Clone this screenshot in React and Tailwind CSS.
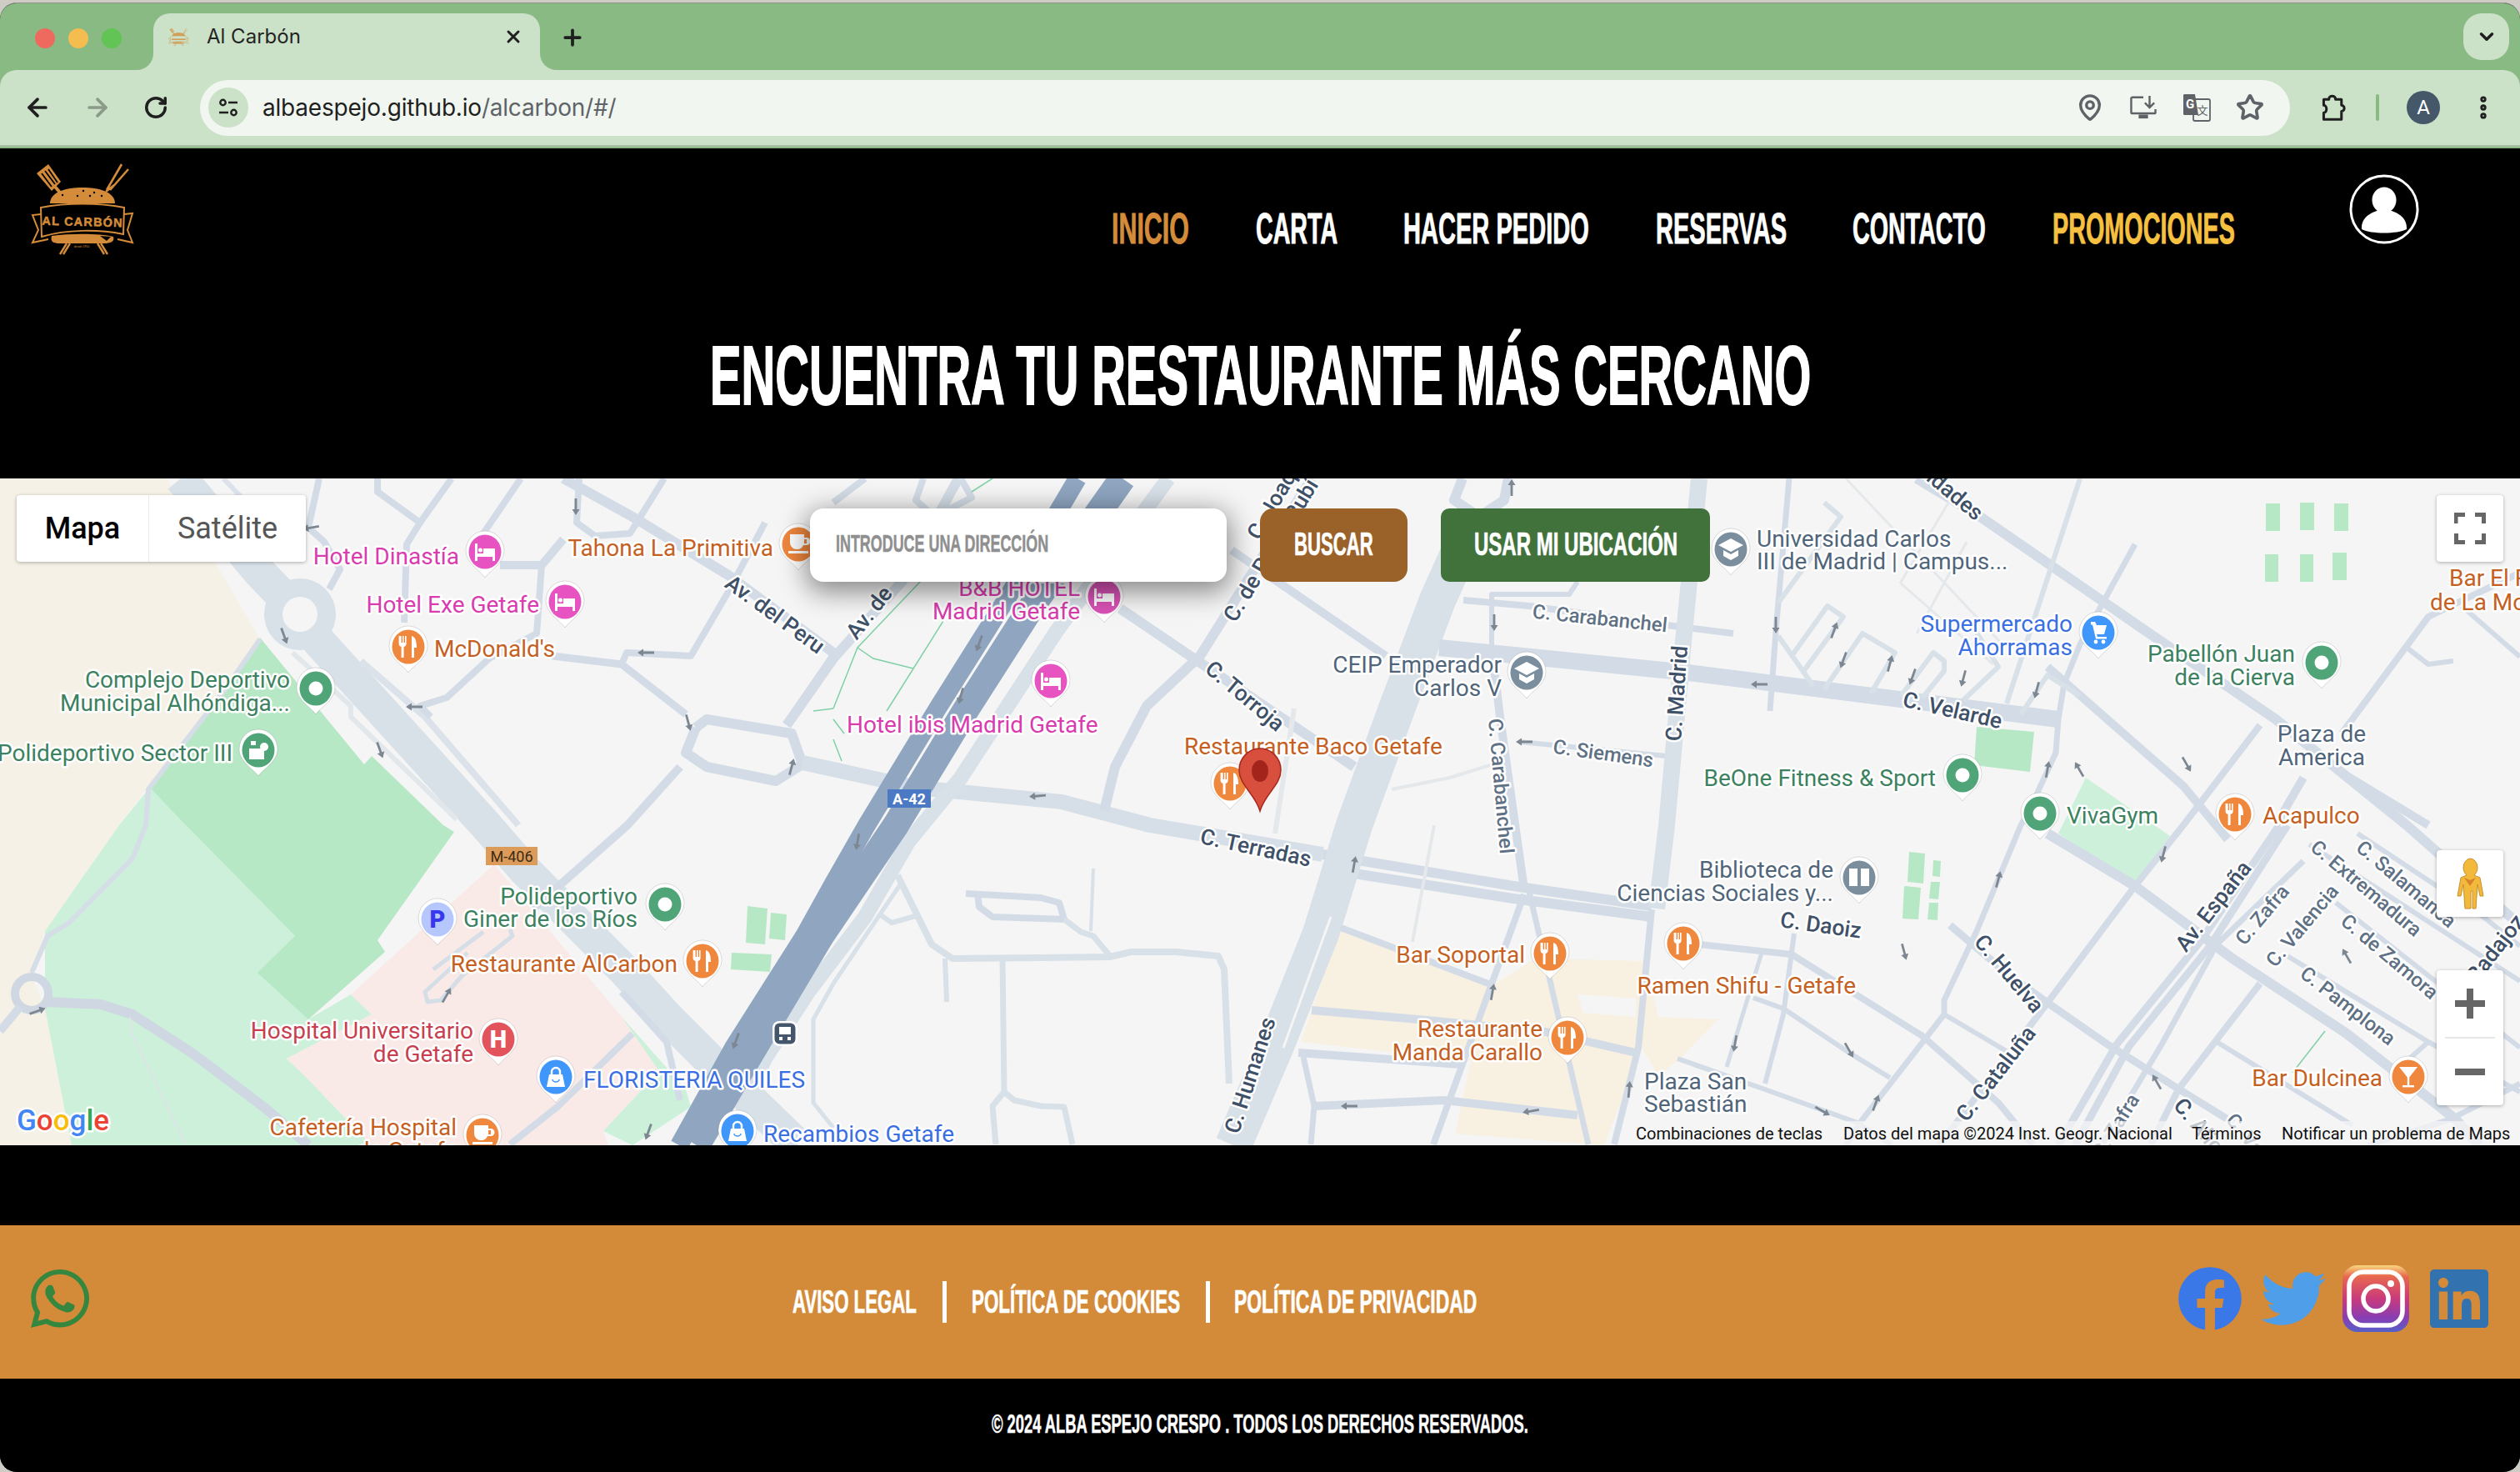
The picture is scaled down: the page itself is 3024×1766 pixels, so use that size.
import React, { useLayoutEffect, useRef } from "react";
import { ArrowLeft, ArrowRight, RotateCw, X, Plus, ChevronDown, MapPin, Star, EllipsisVertical } from "lucide-react";
import { FaWhatsapp, FaFacebook, FaTwitter, FaLinkedin } from "react-icons/fa";

function Fit({ children, className = "" }) {
  const outer = useRef(null);
  const inner = useRef(null);
  useLayoutEffect(() => {
    inner.current.style.transform = `scaleX(${outer.current.clientWidth / inner.current.scrollWidth})`;
  }, []);
  return (
    <span ref={outer} className={`block shrink-0 whitespace-nowrap leading-none font-['Liberation_Sans',sans-serif] font-bold [-webkit-text-stroke:0.018em_currentColor] ${className}`}>
      <span ref={inner} className="inline-block origin-left">{children}</span>
    </span>
  );
}

const ROADS = [
  [40, "#d8e0e8", "217,574 312,687 360,737 383,770 583,990 628,1042 752,1167 800,1220 870,1290 957,1374"],
  [8, "#d3dce6", "746,1190 800,1250 816,1320"],
  [6, "#e2e7ec", "351,783 421,847 421,860 548,983"],
  [8, "#dbe2ea", "433,793 510,860 622,990"],
  [6, "#dbe2ea", "268,574 290,597"],
  [8, "#d3dce6", "383,574 370,633 389,650 408,683 395,707"],
  [8, "#d3dce6", "453,574 453,590 504,627 488,653 485,747"],
  [8, "#d3dce6", "542,574 504,627"],
  [8, "#d3dce6", "625,574 580,640"],
  [10, "#d3dce6", "600,678 650,678 676,647"],
  [8, "#d3dce6", "650,678 644,760 587,790 536,837 504,847 517,860"],
  [12, "#d3dce6", "676,574 759,620 874,690 1000,783"],
  [8, "#d3dce6", "695,574 692,627 714,643 756,640 797,574"],
  [9, "#d3dce6", "663,787 746,797 823,857"],
  [8, "#d3dce6", "746,797 752,783 829,787 874,710 918,627"],
  [12, "#d3dce6", "835,873 848,863 950,880 963,917 931,937 848,920 823,903 835,873"],
  [10, "#d3dce6", "816,920 753,990 640,1090"],
  [10, "#d3dce6", "944,870 1000,787"],
  [18, "#d6dee7", "963,915 1100,945 1274,962 1380,990 1587,1025"],
  [12, "#d3dce6", "1587,1025 1816,1063 1982,1087"],
  [12, "#d3dce6", "1587,1042 1816,1078 1982,1100"],
  [12, "#cfd8e2", "57,1202 121,1205 159,1217 230,1263 319,1330 370,1374"],
  [6, "#d5dde6", "38,1167 57,1123 83,1107 159,1030 175,990 178,947 268,830 312,767"],
  [10, "#d3dce6", "0,1237 24,1208"],
  [2, "#dde3e9", "156,1220 158,1240 223,1373"],
  [5, "#d5dde6", "612,1115 615,1123 555,1170 529,1200 513,1202 510,1190 561,1143"],
  [5, "#d5dde6", "520,1163 580,1118"],
  [8, "#d3dce6", "759,1240 670,1327 612,1373"],
  [18, "#d8e0e8", "1402,574 1268,757 1153,933 1090,1010 1038,1100 970,1190 918,1270 890,1330"],
  [5, "#d8e0e8", "1000,1180 976,1223 976,1323 1000,1353"],
  [5, "#d8e0e8", "1083,1057 1000,1180"],
  [44, "#d8e0e8", "1770,620 1725,720 1675,853 1625,990 1585,1120 1530,1257 1480,1374"],
  [3, "#f5f5f5", "1597,1100 1540,1257"],
  [12, "#d3dce6", "1755,574 1745,600 1775,620 1805,600 1810,574"],
  [12, "#d3dce6", "1344,730 1625,920"],
  [10, "#d3dce6", "1478,660 1663,787"],
  [12, "#d3dce6", "1574,574 1440,787 1376,847 1338,920 1325,973"],
  [6, "#e5e8eb", "1553,850 1530,1000"],
  [8, "#d3dce6", "1159,1072 1249,1077 1271,1083 1277,1103 1191,1100 1175,1088 1173,1072"],
  [7, "#d8e0e8", "1277,1103 1297,1118 1312,1123 1332,1147"],
  [4, "#d8e0e8", "1312,1042 1309,1117"],
  [8, "#d8e0e8", "1077,1050 1118,1133 1143,1150 1332,1148 1357,1142 1411,1142 1462,1147 1469,1163 1475,1300"],
  [6, "#d8e0e8", "1134,1150 1136,1202"],
  [7, "#d8e0e8", "1203,1150 1205,1310 1191,1327 1195,1373"],
  [7, "#d8e0e8", "1205,1310 1217,1320 1249,1327 1277,1328 1287,1373"],
  [6, "#d8e0e8", "1057,1098 1070,1107 1102,1098"],
  [8, "#d3dce6", "1609,1113 1791,1182"],
  [10, "#d3dce6", "1574,1212 1702,1223 1855,1238 1963,1263"],
  [10, "#d3dce6", "1558,1263 1753,1277"],
  [7, "#d3dce6", "1564,1268 1577,1327 1573,1373"],
  [10, "#d3dce6", "1577,1327 1733,1320 1893,1338"],
  [8, "#d3dce6", "1829,1073 1720,1373"],
  [7, "#d3dce6", "1835,1070 1906,1373"],
  [8, "#d3dce6", "1982,1091 1966,1257 1937,1373"],
  [4, "#e5e8eb", "1721,990 1695,1130"],
  [8, "#d3dce6", "1756,720 1835,727 2000,750 2080,760"],
  [6, "#d3dce6", "1790,777 1790,713 1883,713 1893,698"],
  [10, "#d3dce6", "1790,777 1800,860 1829,1067"],
  [6, "#d3dce6", "1823,890 2000,907"],
  [4, "#e5e8eb", "1670,947 1740,933 1791,917"],
  [20, "#d3dce6", "1727,777 2026,807 2470,863"],
  [20, "#d8e0e8", "2039,574 2020,770 2000,990 1988,1090"],
  [7, "#d3dce6", "2147,574 2131,757 2124,853"],
  [7, "#d3dce6", "2470,863 2467,903 2444,953 2425,990 2372,1117 2333,1200 2333,1217 2235,1343 2215,1374"],
  [7, "#d3dce6", "2470,863 2477,820 2496,773 2562,653"],
  [12, "#d3dce6", "2300,574 2372,617 2575,757 2731,863 2888,990 3024,1110"],
  [10, "#d3dce6", "2457,800 2620,943 2673,1007"],
  [12, "#d3dce6", "2457,1000 2562,1063 2679,1150 2816,1240 2947,1343 2975,1374"],
  [6, "#d8e0e8", "2496,574 2408,844"],
  [8, "#d3dce6", "3024,687 2914,740 2810,880"],
  [6, "#d3dce6", "2954,727 3024,788"],
  [6, "#d3dce6", "2888,777 2914,797 2944,793"],
  [8, "#d3dce6", "2712,870 2620,990 2562,1063 2457,1203 2353,1340 2327,1374"],
  [10, "#d3dce6", "2810,927 2914,990"],
  [10, "#d3dce6", "2764,933 2731,990"],
  [6, "#d8e0e8", "2189,603 2209,620 2134,723"],
  [6, "#d8e0e8", "2134,763 2176,823"],
  [6, "#d8e0e8", "2150,787 2193,727 2212,740 2163,807"],
  [6, "#d8e0e8", "2189,827 2235,760 2274,783 2245,832"],
  [6, "#d8e0e8", "2281,835 2320,783 2333,793 2333,805 2307,837"],
  [6, "#d8e0e8", "2356,840 2398,800 2366,750"],
  [6, "#d8e0e8", "2425,857 2457,810 2496,835"],
  [3, "#e5e8eb", "2281,700 2392,797"],
  [3, "#e5e8eb", "2215,574 2400,770"],
  [3, "#e5e8eb", "2340,600 2280,700"],
  [3, "#e5e8eb", "2360,650 2300,760"],
  [8, "#d3dce6", "2039,1133 2150,1145 2307,1243 2398,1323 2440,1374"],
  [6, "#d3dce6", "2153,1120 2140,1217 2118,1300"],
  [5, "#d3dce6", "2114,1143 2072,1280"],
  [6, "#d3dce6", "2104,1197 2140,1210 2219,1263 2268,1293"],
  [6, "#d3dce6", "2013,1270 2118,1307 2229,1347 2270,1374"],
  [6, "#d3dce6", "2333,1217 2411,1263"],
  [9, "#d3dce6", "2340,1110 2411,1170 2457,1203 2529,1253 2620,1310 2680,1347"],
  [7, "#d3dce6", "2764,1033 2660,1133 2594,1253 2522,1373"],
  [9, "#d3dce6", "2735,990 2640,1130 2540,1253 2470,1374"],
  [9, "#d3dce6", "2745,990 2652,1135 2555,1255 2490,1374"],
  [8, "#d3dce6", "2712,1180 2614,1307 2581,1373"],
  [6, "#d3dce6", "2771,1013 3024,1177"],
  [6, "#d3dce6", "2829,1000 2980,1100 3024,1135"],
  [6, "#d3dce6", "2803,1083 3024,1257"],
  [6, "#d3dce6", "2745,1147 2914,1250 3024,1310"],
  [6, "#d3dce6", "2660,1250 2823,1350"],
  [6, "#d3dce6", "2914,1250 2869,1290"],
  [7, "#d3dce6", "3024,1300 2940,1343 2842,1374"],
  [8, "#d3dce6", "1038,574 1000,603"],
  [8, "#d3dce6", "1108,574 1099,600 1121,620 1166,597 1153,574"],
  [12, "#d3dce6", "1150,574 1083,697 1000,790 944,870"],
];
const THIN_GREEN = [
  "1191,574 1166,590",
  "1105,697 1029,777 1000,850",
  "1029,777 1048,790 1096,802",
  "1137,737 1064,853",
  "1000,863 1013,880",
  "1000,887 1010,913",
  "2790,1237 2751,1287",
  "976,853 1000,850",
];
const HIGHWAY = [
  [32, "1347,574 1240,725 1160,850 1075,990 985,1123 905,1257 836,1374"],
  [22, "1293,574 1210,715 1125,850 1040,990 1000,1060 965,1123 880,1257 815,1374"],
];
const ARROWS = [
  [691,608,180],[373,633,-100],[341,763,160],[775,783,-90],[497,848,-90],[826,867,165],[950,920,15],[456,900,160],
  [45,1213,70],[536,1194,30],[883,1249,200],[778,1358,200],[1814,585,0],[1175,772,200],[1153,835,195],[1245,955,-95],
  [1793,747,180],[1829,890,-90],[1029,1010,190],[1625,1037,10],[1791,1190,10],[1619,1327,-90],[1837,1333,-100],[1955,1307,5],
  [2131,750,180],[2201,756,20],[2212,792,200],[2268,796,15],[2295,812,200],[2356,814,195],[2444,828,195],[2111,821,-90],
  [2457,923,10],[2495,923,-30],[2624,917,150],[2596,1025,195],[2398,1055,15],[2285,1142,165],[2816,1147,-30],[2219,1260,150],
  [2082,1252,190],[2251,1323,20],[2187,1333,120],[2588,1298,-30],
];
const OR = "#c5601f", PK = "#d83cae", GR = "#3c8160", BL = "#3a6fe3", RD = "#c83e4e", GY = "#50657a";
const LABELS = [
  ["Hotel Dinastía", 551, 677, "end", PK], ["Tahona La Primitiva", 928, 667, "end", OR], ["Hotel Exe Getafe", 647, 735, "end", PK],
  ["McDonald's", 521, 788, "start", OR], ["Complejo Deportivo", 348, 825, "end", GR], ["Municipal Alhóndiga...", 348, 853, "end", GR],
  ["Polideportivo Sector III", 279, 913, "end", GR], ["Polideportivo", 765, 1085, "end", GR], ["Giner de los Ríos", 765, 1112, "end", GR],
  ["Restaurante AlCarbon", 813, 1166, "end", OR], ["Hospital Universitario", 568, 1246, "end", RD], ["de Getafe", 568, 1274, "end", RD],
  ["FLORISTERIA QUILES", 700, 1305, "start", BL], ["Cafetería Hospital", 548, 1362, "end", OR], ["de Getafe", 548, 1390, "end", OR],
  ["Recambios Getafe", 916, 1370, "start", BL], ["B&B HOTEL", 1296, 715, "end", PK], ["Madrid Getafe", 1296, 743, "end", PK],
  ["Hotel ibis Madrid Getafe", 1016, 879, "start", PK], ["Restaurante Baco Getafe", 1421, 905, "start", OR],
  ["CEIP Emperador", 1802, 807, "end", GY], ["Carlos V", 1802, 835, "end", GY], ["Universidad Carlos", 2108, 656, "start", GY],
  ["III de Madrid | Campus...", 2108, 683, "start", GY], ["Supermercado", 2487, 758, "end", BL], ["Ahorramas", 2487, 786, "end", BL],
  ["Pabellón Juan", 2754, 794, "end", GR], ["de la Cierva", 2754, 822, "end", GR], ["BeOne Fitness & Sport", 2323, 943, "end", GR],
  ["Plaza de", 2786, 890, "middle", GY], ["America", 2786, 918, "middle", GY], ["VivaGym", 2480, 988, "start", GR], ["Acapulco", 2715, 988, "start", OR],
  ["Bar El Rey", 2939, 703, "start", OR], ["de La Morena", 2916, 732, "start", OR], ["Biblioteca de", 2200, 1053, "end", GY],
  ["Ciencias Sociales y...", 2200, 1081, "end", GY], ["Ramen Shifu - Getafe", 2227, 1192, "end", OR], ["Bar Soportal", 1830, 1155, "end", OR],
  ["Restaurante", 1851, 1244, "end", OR], ["Manda Carallo", 1851, 1272, "end", OR], ["Plaza San", 1973, 1307, "start", GY], ["Sebastián", 1973, 1334, "start", GY],
  ["Bar Dulcinea", 2859, 1303, "end", OR],
];
const ST = "#3f5168", SG = "#5f7184";
const STREETS = [
  ["Av. del Peru", 930, 737, 36, ST], ["Av. de", 1043, 735, -52, ST], ["C. Joaquín", 1535, 590, -60, ST], ["C. de Pablo Rubí", 1525, 660, -59, ST],
  ["C. Torroja", 1494, 835, 40, ST], ["C. Terradas", 1507, 1017, 12, ST], ["C. Carabanchel", 1920, 741, 6, SG], ["C. Siemens", 1924, 903, 8, SG],
  ["C. Carabanchel", 1802, 943, 85, SG], ["C. Madrid", 2012, 832, -86, ST], ["C. Velarde", 2343, 852, 13, ST], ["Universidades", 2312, 565, 40, ST],
  ["C. Humanes", 1500, 1290, -72, ST], ["C. Daoiz", 2185, 1110, 8, ST], ["C. Huelva", 2411, 1168, 50, ST], ["C. Cataluña", 2395, 1288, -52, ST],
  ["Av. España", 2656, 1087, -52, ST], ["C. Zafra", 2714, 1097, -50, SG], ["C. Valencia", 2762, 1110, -50, SG], ["C. Extremadura", 2840, 1065, 40, SG],
  ["C. Salamanca", 2888, 1060, 40, SG], ["C. de Zamora", 2868, 1147, 40, SG], ["C. Pamplona", 2818, 1206, 38, SG], ["C. Badajoz", 2985, 1150, -52, ST],
  ["C. Zafra", 2538, 1350, -58, SG], ["C. Alicante", 2655, 1370, 50, ST], ["C. Valladolid", 2720, 1390, 50, SG],
];

const W = "#fff";
const ICONS = {
  bed: (c) => (<g><path d="M-12,-10v21h3v-5h18v5h3V-4H-2v6h-7v-12z" fill={W} /><circle cx="-5.5" cy="-2" r="2.5" fill={W} /></g>),
  food: () => (<g fill={W}><path d="M-10,-13h1.6v8h1.4v-8h1.6v8h1.4v-8H-2.4v10a3.5,3.5 0 0 1-3,3v13h-3V0a3.5,3.5 0 0 1-3-3v-10z" /><path d="M4,-13c5,1 6,8 6,14h-3v12H4z" /></g>),
  cafe: () => (<g fill={W}><path d="M-10,-12h17v4h3a4,4 0 0 1 0,9h-4a8,8 0 0 1-8,5h-0a8,8 0 0 1-8-8z" /><rect x="-12" y="8" width="24" height="3" /><rect x="7" y="-6" width="3" height="5" fill="#ef873d" /></g>),
  dot: () => <circle r="8.5" fill={W} />,
  gym: () => (<g fill={W}><rect x="-11" y="-2" width="18" height="13" /><circle cx="7" cy="-4" r="5" /><rect x="-9" y="-11" width="6" height="5" /></g>),
  bag: (c) => (<g><path d="M-8,-3h16l3,15h-22z" fill={W} /><path d="M-5,-3v-3a5,5 0 0 1 10,0v3" fill="none" stroke={W} strokeWidth="2.4" /><path d="M-4,3a4,3 0 0 0 8,0" fill="none" stroke={c} strokeWidth="1.6" /></g>),
  cart: () => (<g fill={W}><path d="M-9,-13h5l2,4h12l-3,11h-9l1,3h11v2.5h-13l-4-17h-2z" /><circle cx="-3" cy="11" r="2.4" /><circle cx="6" cy="11" r="2.4" /></g>),
  school: (c) => (<g><path d="M0,-13l15,8l-15,8l-15-8z" fill={W} /><path d="M-9,1v7l9,5l9-5v-7l-9,5z" fill={W} /></g>),
  book: () => (<g fill={W}><path d="M-12,-11h10v21h-10z" /><path d="M2,-11h10v21h-10z" /></g>),
  bar: () => (<g><path d="M-11,-12h22l-11,14z" fill={W} /><rect x="-1.2" y="0" width="2.4" height="10" fill={W} /><rect x="-7" y="10" width="14" height="2.4" fill={W} /></g>),
  H: () => <text y="10" textAnchor="middle" fontFamily="Roboto, sans-serif" fontWeight="900" fontSize="29" fill={W}>H</text>,
  P: () => <text y="10" textAnchor="middle" fontFamily="Roboto, sans-serif" fontWeight="900" fontSize="29" fill="#3838ee">P</text>,
};
const O = "#ef873d", P = "#e754c2", G = "#4fa578", B = "#3f96fb", S = "#7a8e9e";
const PINS = [
  [582,662,P,"bed"],[958,653,O,"cafe"],[678,722,P,"bed"],[490,776,O,"food"],[379,826,G,"dot"],[310,900,G,"gym"],[798,1085,G,"dot"],
  [525,1103,"#b5c7fd","P"],[843,1153,O,"food"],[598,1247,"#e2535c","H"],[667,1292,B,"bag"],[579,1362,O,"cafe"],[885,1357,B,"bag"],
  [1325,716,"#d952b6","bed"],[1261,817,P,"bed"],[1476,940,O,"food"],[1832,807,S,"school"],[2077,659,S,"school"],[2518,759,B,"cart"],
  [2786,795,G,"dot"],[2355,930,G,"dot"],[2448,976,G,"dot"],[2682,977,O,"food"],[2231,1053,S,"book"],[2020,1132,O,"food"],[1860,1144,O,"food"],
  [1881,1245,O,"food"],[2890,1292,O,"bar"],
];

function MapDrawing() {
  const halo = { stroke: "#fff", strokeWidth: 5, paintOrder: "stroke", strokeLinejoin: "round" };
  return (
    <svg viewBox="0 574 3024 800" className="absolute inset-0 w-[3024px] h-[800px]" fontFamily="Roboto, sans-serif">
      <rect x="0" y="574" width="3024" height="800" fill="#f5f5f5" />
      <polygon points="0,574 200,574 312,767 143,990 54,1117 38,1170 54,1210 86,1374 0,1374" fill="#f5f1e7" />
      <polygon points="312,765 178,947 143,990 54,1117 54,1210 86,1374 446,1374 367,1292 344,1270 446,1217 421,1193 370,1223 354,1123 223,990" fill="#ccf0da" />
      <polygon points="312,765 182,947 223,990 354,1123 309,1167 370,1223 462,1142 453,1128 545,998 532,990 446,907 437,917" fill="#b7e8c5" />
      <polygon points="593,1037 421,1193 446,1217 344,1270 367,1292 446,1374 730,1374 724,1357 791,1285 746,1220" fill="#faeae7" />
      <polygon points="746,1220 823,1307 829,1328 759,1374 724,1357 791,1285" fill="#ccf0da" />
      <polygon points="1609,1112 1790,1183 1842,1150 1976,1153 1990,1220 2062,1223 2013,1273 1990,1290 1970,1257 1925,1374 1746,1360 1765,1273 1561,1250" fill="#f8f1e1" />
      <polygon points="1893,1193 1963,1198 1963,1220 1900,1215" fill="#f5f5f5" />
      {["2719,604 2736,604 2736,637 2719,637","2760,603 2777,603 2777,636 2760,636","2801,604 2818,604 2818,637 2801,637",
        "2718,665 2734,665 2734,698 2718,698","2760,665 2776,665 2776,698 2760,698","2799,663 2816,663 2816,696 2799,696",
        "2372,872 2441,878 2436,926 2369,918","2291,1022 2310,1024 2308,1060 2289,1058","2320,1032 2329,1033 2328,1052 2319,1051",
        "2285,1063 2305,1065 2302,1103 2283,1102","2317,1058 2328,1058 2326,1079 2315,1078","2315,1083 2326,1083 2325,1104 2313,1103",
        "897,1087 921,1090 918,1133 895,1131","925,1095 944,1097 942,1128 923,1126","878,1143 926,1145 924,1166 877,1163"].map((p) => (
        <polygon key={p} points={p} fill="#b7e8c5" />
      ))}
      <polygon points="2503,933 2604,1003 2562,1060 2470,1000" fill="#ccf0da" />
      <circle cx="360" cy="737" r="32" fill="none" stroke="#d8e0e8" strokeWidth="22" />
      <circle cx="38" cy="1192" r="20" fill="none" stroke="#cfd8e2" strokeWidth="10" />
      {ROADS.map(([w, c, p], i) => (
        <polyline key={i} points={p} fill="none" stroke={c} strokeWidth={w} strokeLinejoin="round" />
      ))}
      <circle cx="360" cy="737" r="21" fill="#f5f5f5" />
      {THIN_GREEN.map((p) => <polyline key={p} points={p} fill="none" stroke="#7fd0a5" strokeWidth="1.5" />)}
      {HIGHWAY.map(([w, p]) => <polyline key={p} points={p} fill="none" stroke="#8fa5c0" strokeWidth={w} strokeLinejoin="round" />)}
      {ARROWS.map(([x, y, r], i) => (
        <path key={i} transform={`translate(${x},${y}) rotate(${r})`} d="M0,-10L4.5,-3H1.4V10H-1.4V-3H-4.5Z" fill="#7d8791" />
      ))}
      <rect x="583" y="1016" width="62" height="22" fill="#dc9b58" />
      <text x="614" y="1034" textAnchor="middle" fontSize="18" fill="#3d2b17">M-406</text>
      <rect x="1065" y="947" width="52" height="22" fill="#4c79c4" />
      <text x="1091" y="965" textAnchor="middle" fontSize="18" fontWeight="700" fill="#fff">A-42</text>
      <g transform="translate(942,1240)">
        <rect x="-15" y="-15" width="30" height="30" rx="8" fill="#fff" />
        <rect x="-12.5" y="-12.5" width="25" height="25" rx="6" fill="#44566c" />
        <path d="M-7,-8h14v9h-14zM-7,4h4v4h-4zM3,4h4v4h-4z" fill="#fff" />
      </g>
      {STREETS.map(([t, x, y, r, c], i) => (
        <text key={i} transform={`translate(${x},${y}) rotate(${r})`} dy="9" textAnchor="middle" fontSize={c === SG ? 24 : 26.5} fontWeight="500" fill={c} {...halo}>{t}</text>
      ))}
      {LABELS.map(([t, x, y, a, c], i) => (
        <text key={i} x={x} y={y} textAnchor={a} fontSize="28" fill={c} {...halo}>{t}</text>
      ))}
      {PINS.map(([x, y, c, k], i) => (
        <g key={i} transform={`translate(${x},${y})`}>
          <path d="M0,31C-4,24 -23,14 -23,-1A23,24 0 1 1 23,-1C23,14 4,24 0,31Z" fill="#fff" stroke="#00000022" strokeWidth="1" />
          <ellipse rx="19.5" ry="20.5" fill={c} />
          {ICONS[k](c)}
        </g>
      ))}
      <g transform="translate(1512,926)">
        <path d="M0,47C-6,26 -25,16 -25,-2A25,26 0 1 1 25,-2C25,16 6,26 0,47Z" fill="#d94f3e" stroke="#a8281c" strokeWidth="1.5" />
        <ellipse rx="10" ry="13" cy="-1" fill="#a3241b" />
      </g>
      <text x="20" y="1356" fontSize="35" fontWeight="500" {...halo}>
        <tspan fill="#4285f4">G</tspan><tspan fill="#ea4335">o</tspan><tspan fill="#fbbc05">o</tspan><tspan fill="#4285f4">g</tspan><tspan fill="#34a853">l</tspan><tspan fill="#ea4335">e</tspan>
      </text>
      <rect x="1953" y="1345" width="1071" height="29" fill="#f5f5f5" fillOpacity="0.72" />
      {[["Combinaciones de teclas", 1963], ["Datos del mapa ©2024 Inst. Geogr. Nacional", 2212], ["Términos", 2630], ["Notificar un problema de Maps", 2738]].map(([t, x]) => (
        <text key={t} x={x} y="1367" fontSize="20" fill="#111">{t}</text>
      ))}
    </svg>
  );
}

function Logo({ className = "", bg = "#000", small = false }) {
  const c = "#d48c3a";
  return (
    <svg viewBox="37 195 126 113" className={className}>
      <path d="M58,197L73,218L62,229L44,208Z" fill={c} />
      <path d="M54,205L66,221M58,203L69,219M50,208L62,224" stroke={bg} strokeWidth="1.8" />
      <path d="M66,224L72,231" stroke={c} strokeWidth="4" />
      <path d="M146,197L128,228M154,203L132,228M127,230L137,222" stroke={c} strokeWidth="2.6" fill="none" />
      <path d="M60,244C60,230 80,225 99,225C118,225 138,230 138,244Z" fill={c} />
      <g fill={bg}><circle cx="75" cy="234" r="1.2" /><circle cx="93" cy="235" r="1.2" /><circle cx="100" cy="229" r="1.2" /><circle cx="113" cy="231" r="1.2" /><circle cx="108" cy="235" r="1.2" /><circle cx="122" cy="235" r="1.2" /></g>
      <path d="M49,249C80,243 118,243 149,249L148,281C118,275 80,275 50,284Z" fill={bg} stroke={c} strokeWidth="2" />
      <path d="M49,257L39,258L46,276L39,291L58,287M149,257L159,256L153,276L159,291L141,287" fill="none" stroke={c} strokeWidth="2" />
      {!small && <text x="99" y="271" textAnchor="middle" fontFamily="'Liberation Sans', sans-serif" fontWeight="700" fontSize="14.5" letterSpacing="1.2" fill={c} stroke={c} strokeWidth="0.5" transform="rotate(1.5 99 271)">AL CARBÓN</text>}
      {small && <path d="M56,265H142" stroke={c} strokeWidth="8" />}
      <path d="M62,283C85,280 120,280 136,284C138,290 132,292 125,292H72C64,292 60,290 62,283Z" fill={c} />
      <path d="M120,283L133,284L128,289Z" fill={bg} />
      <path d="M80,292L72,305M84,292L76,305M117,292L125,305M121,292L129,305" stroke={c} strokeWidth="2.4" />
      {!small && <text x="98" y="297" textAnchor="middle" fontFamily="'Liberation Sans', sans-serif" fontSize="3.5" fill={c}>desde 1950</text>}
    </svg>
  );
}

function SiteIcon() {
  return (
    <svg width="26" height="26" viewBox="0 0 26 26" fill="none" stroke="#1f1f1f" strokeWidth="2.4">
      <circle cx="6.5" cy="7" r="3.2" /><path d="M13,7H24" /><circle cx="19.5" cy="19" r="3.2" /><path d="M2,19H13" />
    </svg>
  );
}
function InstallIcon() {
  return (
    <svg width="34" height="30" viewBox="0 0 34 32" fill="none" stroke="#5f6368" strokeWidth="2.6">
      <path d="M17,3H3a1.5,1.5 0 0 0-1.5,1.5V22A1.5,1.5 0 0 0 3,23.5H31A1.5,1.5 0 0 0 32.5,22V18" />
      <path d="M25,1V15M19,10L25,16L31,10" />
      <rect x="11" y="25" width="12" height="5" fill="#5f6368" stroke="none" />
    </svg>
  );
}
function TranslateIcon() {
  return (
    <svg width="34" height="34" viewBox="0 0 34 34">
      <rect x="13" y="7" width="20" height="26" rx="2" fill="#f1f7f0" stroke="#5f6368" strokeWidth="1.8" />
      <path d="M2,1H15L19,26H2a1.5,1.5 0 0 1-1-1.5V2.5A1.5,1.5 0 0 1 2,1Z" fill="#5f6368" />
      <text x="9" y="18" textAnchor="middle" fontFamily="Roboto, sans-serif" fontWeight="700" fontSize="15" fill="#fff">G</text>
      <text x="24" y="25" textAnchor="middle" fontFamily="'Noto Sans CJK SC', sans-serif" fontSize="13" fill="#5f6368">文</text>
    </svg>
  );
}
function PuzzleIcon() {
  return (
    <svg width="32" height="32" viewBox="0 0 36 36" fill="none" stroke="#1f1f1f" strokeWidth="3.4" strokeLinejoin="round">
      <path d="M5,7H12C12,1 21,1 21,7H29V15C34,15 34,23 29,23V34H5V25C10,25 10,15 5,15Z" />
    </svg>
  );
}
function UserIcon() {
  return (
    <svg width="84" height="84" viewBox="0 0 84 84">
      <circle cx="42" cy="42" r="40" fill="none" stroke="#fff" strokeWidth="3" />
      <ellipse cx="42" cy="31" rx="14.5" ry="15.5" fill="#fff" />
      <path d="M15,66C14,52 26,46 36,43C40,46 44,46 48,43C58,46 70,52 69,66C58,72 26,72 15,66Z" fill="#fff" />
    </svg>
  );
}
function Instagram() {
  return (
    <svg width="80" height="80" viewBox="0 0 80 80">
      <defs>
        <linearGradient id="ig" x1="0" y1="0" x2="0" y2="1">
          <stop offset="0" stopColor="#f9d77e" />
          <stop offset="0.17" stopColor="#e8684f" />
          <stop offset="0.5" stopColor="#c93a7c" />
          <stop offset="0.78" stopColor="#8a3db2" />
          <stop offset="1" stopColor="#5560c8" />
        </linearGradient>
      </defs>
      <rect width="80" height="80" rx="18" fill="url(#ig)" />
      <rect x="8" y="8" width="64" height="64" rx="17" fill="none" stroke="#fff" strokeWidth="5.5" />
      <circle cx="40" cy="40" r="15" fill="none" stroke="#fff" strokeWidth="5.5" />
      <circle cx="58" cy="22" r="4" fill="#fff" />
    </svg>
  );
}
function Pegman() {
  return (
    <svg width="36" height="62" viewBox="0 0 36 62">
      <path d="M18,1a9,11 0 0 1 9,11c0,4-2,7-4,9l7,3l4,22h-4l-3-14l-2,29h-4V40h-2v21H12L10,32L7,46H3L7,24l7-3c-2-2-4-5-4-9a9,11 0 0 1 8-11Z" fill="#f2b93b" stroke="#c98f2c" strokeWidth="1" />
      <path d="M11,24L18,34L25,24L18,27Z" fill="#d9822b" />
    </svg>
  );
}

const NAV = [
  ["INICIO", "w-[93px]", "text-[#d48c3a]"],
  ["CARTA", "w-[98px]", "text-white"],
  ["HACER PEDIDO", "w-[223px]", "text-white"],
  ["RESERVAS", "w-[157px]", "text-white"],
  ["CONTACTO", "w-[160px]", "text-white"],
  ["PROMOCIONES", "w-[219px]", "text-[#f6c041]"],
];

export default function App() {
  return (
    <div className="w-[3024px] h-[1766px] bg-[#cfccc6] pt-[3px] overflow-hidden font-['Roboto',sans-serif]">
      <div className="h-[1763px] rounded-[20px] overflow-hidden bg-black border-t border-[#8e9489]">
        {/* Browser chrome */}
        <div className="bg-[#8aba84] h-[174px]">
          <div className="relative h-[80px] pt-[12px] flex items-start">
            <div className="flex items-center gap-[16px] pl-[42px] pt-[18px] w-[184px]">
              <span className="block size-[24px] rounded-full bg-[#ee6a5f]" />
              <span className="block size-[24px] rounded-full bg-[#f5bd4f]" />
              <span className="block size-[24px] rounded-full bg-[#61c454]" />
            </div>
            <div className="relative w-[464px] h-[68px] bg-[#cbe2c9] rounded-t-[20px] flex items-center pl-[18px] pb-[12px]">
              <span className="absolute -left-[24px] bottom-0 size-[24px] bg-[#cbe2c9]"><span className="block size-full bg-[#8aba84] rounded-br-[20px]" /></span>
              <span className="absolute -right-[24px] bottom-0 size-[24px] bg-[#cbe2c9]"><span className="block size-full bg-[#8aba84] rounded-bl-[20px]" /></span>
              <Logo small bg="#cbe2c9" className="w-[25px] h-[25px] opacity-80" />
              <span className="ml-[21px] text-[24px] text-[#242424] font-['Inter',sans-serif]">Al Carbón</span>
              <X className="ml-auto mr-[20px]" size={24} strokeWidth={3} color="#1f1f1f" />
            </div>
            <Plus className="ml-[24px] mt-[14px]" size={30} strokeWidth={3} color="#1f1f1f" />
            <div className="absolute right-[13px] top-[12px] w-[55px] h-[56px] rounded-[22px] bg-[#cbe2c9] flex items-center justify-center">
              <ChevronDown size={26} strokeWidth={3.2} color="#1f1f1f" />
            </div>
          </div>
          <div className="h-[92px] rounded-t-[20px] bg-[#cbe2c9] border-b-2 border-[#a9bfa7] flex items-center pl-[28px]">
            <ArrowLeft size={34} strokeWidth={2.6} color="#1f1f1f" />
            <ArrowRight className="ml-[38px]" size={34} strokeWidth={2.6} color="#8b9a89" />
            <RotateCw className="ml-[38px]" size={30} strokeWidth={2.8} color="#1f1f1f" />
            <div className="ml-[38px] w-[2508px] h-[67px] rounded-full bg-[#f1f7f0] flex items-center pl-[10px] pr-[31px]">
              <span className="size-[48px] rounded-full bg-[#cbe2c9] flex items-center justify-center"><SiteIcon /></span>
              <span className="ml-[17px] text-[28px] text-[#1f1f1f] font-['Inter',sans-serif] tracking-[-0.2px]">albaespejo.github.io<span className="text-[#5f6368]">/alcarbon/#/</span></span>
              <div className="ml-auto flex items-center gap-[30px]">
                <MapPin size={34} strokeWidth={2.4} color="#5f6368" />
                <InstallIcon />
                <TranslateIcon />
                <Star size={34} strokeWidth={2.6} color="#5f6368" />
              </div>
            </div>
            <span className="ml-[36px]"><PuzzleIcon /></span>
            <span className="ml-[35px] block w-[4px] h-[32px] rounded bg-[#8aba84]" />
            <span className="ml-[33px] size-[40px] rounded-full bg-[#44586a] text-white text-[24px] flex items-center justify-center">A</span>
            <EllipsisVertical className="ml-[35px]" size={34} strokeWidth={3.2} color="#1f1f1f" />
          </div>
        </div>

        {/* Site header */}
        <header className="h-[396px] bg-black flex flex-col">
          <div className="h-[150px] flex items-start pl-[39px]">
            <Logo className="mt-[17px] w-[126px] h-[113px] -ml-[2px]" />
            <nav className="ml-[1171px] mt-[70px] flex gap-[79.6px] text-[52px]">
              {NAV.map(([t, w, c]) => <Fit key={t} className={`${w} ${c}`}>{t}</Fit>)}
            </nav>
            <span className="ml-[137px] mt-[31px]"><UserIcon /></span>
          </div>
          <h1 className="mt-[72px] flex justify-center text-[100px] text-white">
            <Fit className="w-[1321px]">ENCUENTRA TU RESTAURANTE MÁS CERCANO</Fit>
          </h1>
        </header>

        {/* Map */}
        <section className="relative h-[800px] overflow-hidden bg-[#f5f5f5]">
          <MapDrawing />
          <div className="absolute left-[20px] top-[20px] w-[347px] h-[80px] flex bg-white rounded-[4px] shadow-[0_1px_4px_rgba(0,0,0,0.3)] text-[36px]">
            <span className="w-[159px] flex items-center justify-center font-medium text-black border-r border-[#ececec]">Mapa</span>
            <span className="flex-1 flex items-center justify-center text-[#565656]">Satélite</span>
          </div>
          <div className="absolute left-[972px] top-[36px] flex gap-[40px]">
            <div className="w-[500px] h-[88px] rounded-[16px] bg-white shadow-[0_8px_32px_4px_rgba(0,0,0,0.45)] flex items-center pl-[31px] pb-[4px] text-[30px] text-[#8f8f8f]">
              <Fit className="w-[255px]">INTRODUCE UNA DIRECCIÓN</Fit>
            </div>
            <div className="w-[177px] h-[88px] rounded-[16px] bg-[#9a6228] flex items-center justify-center pb-[2px] text-[38px] text-white">
              <Fit className="w-[95px]">BUSCAR</Fit>
            </div>
            <div className="w-[323px] h-[88px] rounded-[10px] bg-[#42723c] flex items-center justify-center pb-[2px] text-[38px] text-white">
              <Fit className="w-[244px]">USAR MI UBICACIÓN</Fit>
            </div>
          </div>
          <div className="absolute left-[2924px] top-[20px] size-[80px] bg-white rounded-[4px] shadow-[0_1px_4px_rgba(0,0,0,0.3)] flex items-center justify-center">
            <svg width="38" height="38" viewBox="0 0 38 38" fill="none" stroke="#666" strokeWidth="5"><path d="M2,13V2.5H13M25,2.5H35.5V13M35.5,25V35.5H25M13,35.5H2.5V25" /></svg>
          </div>
          <div className="absolute left-[2924px] top-[446px] size-[80px] bg-white rounded-[4px] shadow-[0_1px_4px_rgba(0,0,0,0.3)] flex items-center justify-center">
            <Pegman />
          </div>
          <div className="absolute left-[2924px] top-[590px] w-[80px] h-[162px] bg-white rounded-[4px] shadow-[0_1px_4px_rgba(0,0,0,0.3)] flex flex-col items-center">
            <span className="h-[80px] flex items-center justify-center"><svg width="36" height="36" viewBox="0 0 36 36" fill="#666"><path d="M14,0h8v14h14v8H22v14h-8V22H0v-8h14z" /></svg></span>
            <span className="block w-[60px] h-[2px] bg-[#e6e6e6]" />
            <span className="h-[80px] flex items-center justify-center"><span className="block w-[36px] h-[8px] bg-[#666]" /></span>
          </div>
        </section>

        <div className="h-[96px] bg-black" />

        {/* Footer */}
        <footer className="h-[184px] bg-[#d38b39] flex items-center relative">
          <FaWhatsapp className="ml-[32px] mb-[8px] text-[#35863e]" size={80} />
          <div className="absolute left-[951px] top-[67px] flex items-center text-[38px] text-white">
            <Fit className="w-[149px]">AVISO LEGAL</Fit>
            <span className="ml-[31px] block w-[5px] h-[50px] bg-white" />
            <Fit className="ml-[30px] w-[250px]">POLÍTICA DE COOKIES</Fit>
            <span className="ml-[31px] block w-[5px] h-[50px] bg-white" />
            <Fit className="ml-[29px] w-[291px]">POLÍTICA DE PRIVACIDAD</Fit>
          </div>
          <div className="ml-auto mr-[33px] mb-[8px] flex items-center">
            <FaFacebook size={78} color="#3b78e7" />
            <FaTwitter className="ml-[22px]" size={78} color="#4e9ee9" />
            <span className="ml-[20px]"><Instagram /></span>
            <FaLinkedin className="ml-[20px]" size={80} color="#3272ae" />
          </div>
        </footer>
        <div className="h-[109px] bg-black flex justify-center pt-[38px] text-[32px] text-white">
          <Fit className="w-[644px]">© 2024 ALBA ESPEJO CRESPO . TODOS LOS DERECHOS RESERVADOS.</Fit>
        </div>
      </div>
    </div>
  );
}
